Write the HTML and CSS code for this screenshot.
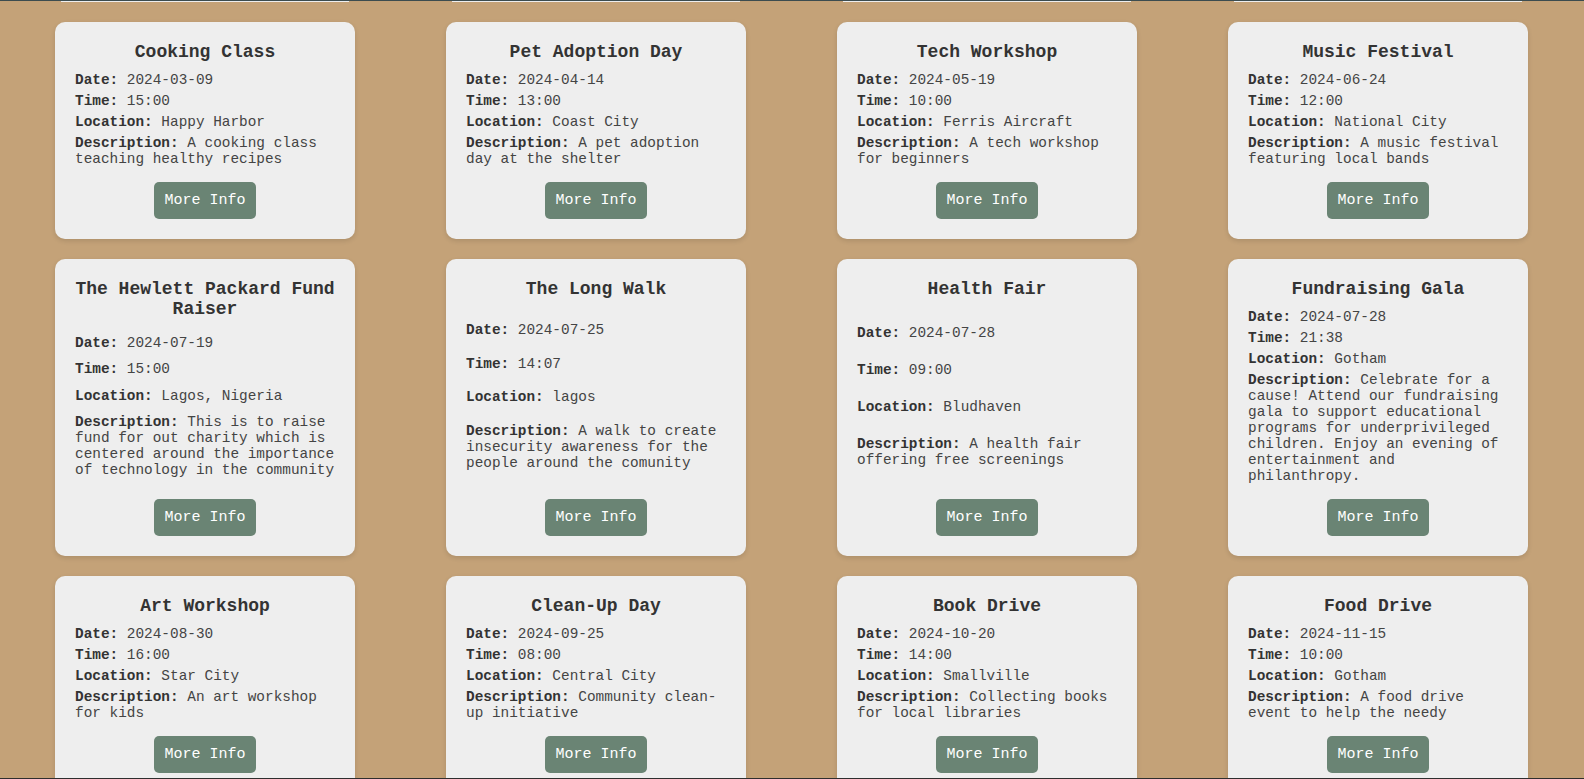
FILE: index.html
```html
<!DOCTYPE html>
<html lang="en">
<head>
<meta charset="utf-8">
<title>Events</title>
<link rel="stylesheet" href="styles.css">
</head>
<body>
<main class="events">
  <div class="peek-row">
    <div class="peek"></div><div class="peek"></div><div class="peek"></div><div class="peek"></div>
  </div>
  <section class="grid">
    <article class="card">
      <h3>Cooking Class</h3>
      <p><strong>Date:</strong> 2024-03-09</p>
      <p><strong>Time:</strong> 15:00</p>
      <p><strong>Location:</strong> Happy Harbor</p>
      <p><strong>Description:</strong> A cooking class teaching healthy recipes</p>
      <button class="btn">More Info</button>
    </article>
    <article class="card">
      <h3>Pet Adoption Day</h3>
      <p><strong>Date:</strong> 2024-04-14</p>
      <p><strong>Time:</strong> 13:00</p>
      <p><strong>Location:</strong> Coast City</p>
      <p><strong>Description:</strong> A pet adoption day at the shelter</p>
      <button class="btn">More Info</button>
    </article>
    <article class="card">
      <h3>Tech Workshop</h3>
      <p><strong>Date:</strong> 2024-05-19</p>
      <p><strong>Time:</strong> 10:00</p>
      <p><strong>Location:</strong> Ferris Aircraft</p>
      <p><strong>Description:</strong> A tech workshop for beginners</p>
      <button class="btn">More Info</button>
    </article>
    <article class="card">
      <h3>Music Festival</h3>
      <p><strong>Date:</strong> 2024-06-24</p>
      <p><strong>Time:</strong> 12:00</p>
      <p><strong>Location:</strong> National City</p>
      <p><strong>Description:</strong> A music festival featuring local bands</p>
      <button class="btn">More Info</button>
    </article>
    <article class="card">
      <h3>The Hewlett Packard Fund Raiser</h3>
      <p><strong>Date:</strong> 2024-07-19</p>
      <p><strong>Time:</strong> 15:00</p>
      <p><strong>Location:</strong> Lagos, Nigeria</p>
      <p><strong>Description:</strong> This is to raise fund for out charity which is centered around the importance of technology in the community</p>
      <button class="btn">More Info</button>
    </article>
    <article class="card">
      <h3>The Long Walk</h3>
      <p><strong>Date:</strong> 2024-07-25</p>
      <p><strong>Time:</strong> 14:07</p>
      <p><strong>Location:</strong> lagos</p>
      <p><strong>Description:</strong> A walk to create insecurity awareness for the people around the comunity</p>
      <button class="btn">More Info</button>
    </article>
    <article class="card">
      <h3>Health Fair</h3>
      <p><strong>Date:</strong> 2024-07-28</p>
      <p><strong>Time:</strong> 09:00</p>
      <p><strong>Location:</strong> Bludhaven</p>
      <p><strong>Description:</strong> A health fair offering free screenings</p>
      <button class="btn">More Info</button>
    </article>
    <article class="card">
      <h3>Fundraising Gala</h3>
      <p><strong>Date:</strong> 2024-07-28</p>
      <p><strong>Time:</strong> 21:38</p>
      <p><strong>Location:</strong> Gotham</p>
      <p><strong>Description:</strong> Celebrate for a cause! Attend our fundraising gala to support educational programs for underprivileged children. Enjoy an evening of entertainment and philanthropy.</p>
      <button class="btn">More Info</button>
    </article>
    <article class="card">
      <h3>Art Workshop</h3>
      <p><strong>Date:</strong> 2024-08-30</p>
      <p><strong>Time:</strong> 16:00</p>
      <p><strong>Location:</strong> Star City</p>
      <p><strong>Description:</strong> An art workshop for kids</p>
      <button class="btn">More Info</button>
    </article>
    <article class="card">
      <h3>Clean-Up Day</h3>
      <p><strong>Date:</strong> 2024-09-25</p>
      <p><strong>Time:</strong> 08:00</p>
      <p><strong>Location:</strong> Central City</p>
      <p><strong>Description:</strong> Community clean-up initiative</p>
      <button class="btn">More Info</button>
    </article>
    <article class="card">
      <h3>Book Drive</h3>
      <p><strong>Date:</strong> 2024-10-20</p>
      <p><strong>Time:</strong> 14:00</p>
      <p><strong>Location:</strong> Smallville</p>
      <p><strong>Description:</strong> Collecting books for local libraries</p>
      <button class="btn">More Info</button>
    </article>
    <article class="card">
      <h3>Food Drive</h3>
      <p><strong>Date:</strong> 2024-11-15</p>
      <p><strong>Time:</strong> 10:00</p>
      <p><strong>Location:</strong> Gotham</p>
      <p><strong>Description:</strong> A food drive event to help the needy</p>
      <button class="btn">More Info</button>
    </article>
  </section>
</main>
<div class="bottom-edge"></div>
</body>
</html>
```

FILE: styles.css
```css
html, body {
  margin: 0;
  padding: 0;
}

body {
  background: #c4a278;
  font-family: "Liberation Mono", "Courier New", monospace;
  color: #333;
  border-top: 1px solid #3c4c4f;
}

.events {
  padding: 0 56px 40px 55px;
}

.peek-row,
.grid {
  display: grid;
  grid-template-columns: repeat(4, 300px);
  justify-content: space-between;
}

.peek-row {
  height: 1px;
  margin-bottom: 20px;
}

.peek {
  margin: 0 6px;
  background: #eeeeee;
}

.grid {
  row-gap: 20px;
}

.card {
  background: #eeeeee;
  border-radius: 10px;
  padding: 20px;
  box-shadow: 0 2px 5px rgba(0, 0, 0, 0.12);
  display: flex;
  flex-direction: column;
  justify-content: space-between;
}

.card h3 {
  margin: 0 0 10px;
  font-size: 18px;
  font-weight: bold;
  text-align: center;
  color: #333;
}

.card p {
  margin: 0 0 5px;
  font-size: 14.4px;
  color: #444;
}

.card p strong {
  color: #333;
}

.btn {
  align-self: center;
  margin-top: 10px;
  background: #6a8474;
  color: #fff;
  border: none;
  border-radius: 5px;
  padding: 10px;
  font-family: "Liberation Mono", "Courier New", monospace;
  font-size: 15px;
  cursor: pointer;
}

.bottom-edge {
  position: fixed;
  left: 0;
  right: 0;
  bottom: 0;
  height: 1px;
  background: #2e2e2e;
}
```
